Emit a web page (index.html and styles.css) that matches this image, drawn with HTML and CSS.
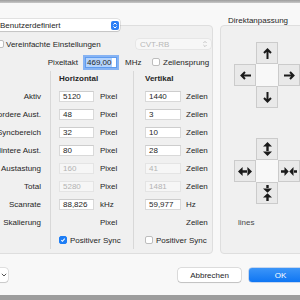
FILE: index.html
```html
<!DOCTYPE html>
<html lang="de">
<head>
    <meta charset="UTF-8">
    <title>Benutzerdefinierte Auflösung</title>
    <link rel="stylesheet" href="styles.css">
</head>
<body>
    <div class="topbar"></div>
    <div class="window">
        <div class="main">
            <div class="left">
                <div class="popup">
                    <span>Benutzerdefiniert</span>
                    <span class="stepper">
                        <svg width="8" height="9" viewBox="0 0 8 9"><path d="M2.4 3.6 L4 2 L5.6 3.6 M2.4 5.4 L4 7 L5.6 5.4" stroke="#fff" stroke-width="1" fill="none"/></svg>
                    </span>
                </div>
                <div class="box box-left">
                    <div class="row row-simple">
                        <span class="check"></span>
                        <span class="check-label">Vereinfachte Einstellungen</span>
                        <div class="popup-disabled">
                            <span>CVT-RB</span>
                            <svg width="6" height="8" viewBox="0 0 6 8"><path d="M1.4 3 L3 1.4 L4.6 3 M1.4 5 L3 6.6 L4.6 5" stroke="#bdbdbd" stroke-width="0.9" fill="none"/></svg>
                        </div>
                    </div>
                    <div class="row row-clock">
                        <span class="clock-label">Pixeltakt</span>
                        <span class="field field-focus"><span class="sel">469,00</span></span>
                        <span class="unit-mhz">MHz</span>
                        <span class="check"></span>
                        <span class="check-label">Zeilensprung</span>
                    </div>
                    <div class="cols">
                        <div class="col col-labels">
                            <div class="head"></div>
                            <div class="cell">Aktiv</div>
                            <div class="cell">Vordere Aust.</div>
                            <div class="cell">Syncbereich</div>
                            <div class="cell">Hintere Aust.</div>
                            <div class="cell">Austastung</div>
                            <div class="cell">Total</div>
                            <div class="cell">Scanrate</div>
                            <div class="cell">Skalierung</div>
                            <div class="cell"></div>
                        </div>
                        <div class="col col-h">
                            <div class="head">Horizontal</div>
                            <div class="cell"><span class="field">5120</span><span class="unit">Pixel</span></div>
                            <div class="cell"><span class="field">48</span><span class="unit">Pixel</span></div>
                            <div class="cell"><span class="field">32</span><span class="unit">Pixel</span></div>
                            <div class="cell"><span class="field">80</span><span class="unit">Pixel</span></div>
                            <div class="cell"><span class="field disabled">160</span><span class="unit">Pixel</span></div>
                            <div class="cell"><span class="field disabled">5280</span><span class="unit">Pixel</span></div>
                            <div class="cell"><span class="field">88,826</span><span class="unit">kHz</span></div>
                            <div class="cell"><span class="unit unit-only">Pixel</span></div>
                            <div class="cell">
                                <span class="check checked">
                                    <svg width="8" height="8" viewBox="0 0 8 8"><path d="M1.8 4.1 L3.3 5.7 L6.3 2.2" stroke="#fff" stroke-width="1.4" fill="none"/></svg>
                                </span>
                                <span class="check-label">Positiver Sync</span>
                            </div>
                        </div>
                        <div class="col col-v">
                            <div class="head">Vertikal</div>
                            <div class="cell"><span class="field">1440</span><span class="unit">Zeilen</span></div>
                            <div class="cell"><span class="field">3</span><span class="unit">Zeilen</span></div>
                            <div class="cell"><span class="field">10</span><span class="unit">Zeilen</span></div>
                            <div class="cell"><span class="field">28</span><span class="unit">Zeilen</span></div>
                            <div class="cell"><span class="field disabled">41</span><span class="unit">Zeilen</span></div>
                            <div class="cell"><span class="field disabled">1481</span><span class="unit">Zeilen</span></div>
                            <div class="cell"><span class="field">59,977</span><span class="unit">Hz</span></div>
                            <div class="cell"><span class="unit unit-only">Zeilen</span></div>
                            <div class="cell">
                                <span class="check"></span>
                                <span class="check-label">Positiver Sync</span>
                            </div>
                        </div>
                    </div>
                </div>
            </div>
            <div class="right">
                <div class="title">Direktanpassung</div>
                <div class="box box-right">
                    <div class="pad">
                        <span class="key key-n">
                            <svg width="9" height="11" viewBox="0 0 9 11"><path d="M1 5 L4.5 1.5 L8 5 M4.5 2 V11" stroke="#1a1a1a" stroke-width="2" fill="none"/></svg>
                        </span>
                        <span class="key key-w">
                            <svg width="11" height="9" viewBox="0 0 11 9"><path d="M5 1 L1.5 4.5 L5 8 M2 4.5 H11" stroke="#1a1a1a" stroke-width="2" fill="none"/></svg>
                        </span>
                        <span class="key-c"></span>
                        <span class="key key-e">
                            <svg width="11" height="9" viewBox="0 0 11 9"><path d="M6 1 L9.5 4.5 L6 8 M9 4.5 H0" stroke="#1a1a1a" stroke-width="2" fill="none"/></svg>
                        </span>
                        <span class="key key-s">
                            <svg width="9" height="11" viewBox="0 0 9 11"><path d="M1 6 L4.5 9.5 L8 6 M4.5 9 V0" stroke="#1a1a1a" stroke-width="2" fill="none"/></svg>
                        </span>
                    </div>
                    <div class="pad pad-size">
                        <span class="key key-n">
                            <svg width="9" height="14" viewBox="0 0 9 14"><path d="M4.5 0 L9 4.6 L0 4.6 Z M4.5 14 L9 9.4 L0 9.4 Z M3.3 4 H5.7 V10 H3.3 Z" fill="#1a1a1a"/></svg>
                        </span>
                        <span class="key key-w">
                            <svg width="14" height="9" viewBox="0 0 14 9"><path d="M0 4.5 L4.6 0 L4.6 9 Z M14 4.5 L9.4 0 L9.4 9 Z M4 3.3 H10 V5.7 H4 Z" fill="#1a1a1a"/></svg>
                        </span>
                        <span class="key-c"></span>
                        <span class="key key-e">
                            <svg width="16" height="9" viewBox="0 0 16 9"><path d="M3.5 0 L7.7 4.5 L3.5 9 Z M12.5 0 L8.3 4.5 L12.5 9 Z M0 3.3 H4 V5.7 H0 Z M12 3.3 H16 V5.7 H12 Z" fill="#1a1a1a"/></svg>
                        </span>
                        <span class="key key-s">
                            <svg width="9" height="16" viewBox="0 0 9 16"><path d="M0 3.5 L4.5 7.7 L9 3.5 Z M0 12.5 L4.5 8.3 L9 12.5 Z M3.3 0 H5.7 V4 H3.3 Z M3.3 12 H5.7 V16 H3.3 Z" fill="#1a1a1a"/></svg>
                        </span>
                    </div>
                    <div class="lines">lines</div>
                </div>
            </div>
        </div>
        <div class="footer">
            <div class="mini-popup">
                <svg width="6" height="4" viewBox="0 0 6 4"><path d="M0.8 0.8 L3 3 L5.2 0.8" stroke="#555" stroke-width="1" fill="none"/></svg>
            </div>
            <div class="spacer"></div>
            <button class="btn">Abbrechen</button>
            <button class="btn btn-default">OK</button>
        </div>
    </div>
    <div class="bottombar"></div>
</body>
</html>
```

FILE: styles.css
```css
* {
    box-sizing: border-box;
}

html, body {
    margin: 0;
}

body {
    width: 300px;
    height: 300px;
    overflow: hidden;
    background: #f8f8f8;
    font-family: "Liberation Sans", Arial, sans-serif;
    font-size: 8px;
    color: #262626;
}

.topbar {
    height: 3px;
    background: linear-gradient(#9c9c9c, #c8c8c8);
}

.window {
    width: 322px;
    margin-left: -10px;
}

.main {
    display: flex;
    gap: 7px;
    margin-top: 16px;
}

.left {
    width: 223px;
    display: flex;
    flex-direction: column;
}

.popup {
    position: relative;
    z-index: 1;
    display: flex;
    align-items: center;
    width: 130px;
    height: 12px;
    margin-bottom: -6px;
    padding: 0 1px 0 10px;
    background: #fff;
    border-radius: 3px;
    box-shadow: 0 0 0 0.5px rgba(0, 0, 0, 0.18), 0 1px 1px rgba(0, 0, 0, 0.1);
}

    .popup .stepper {
        margin-left: auto;
        width: 8px;
        height: 9px;
        border-radius: 2px;
        background: #2b7ff6;
        display: flex;
    }

.box {
    background: #f0f0f0;
    border: 1px solid #dedede;
    border-radius: 4px;
}

.box-left {
    flex: 1;
    padding: 9px 0 4px 0;
}

.row {
    display: flex;
    align-items: center;
    height: 18px;
}

.row-simple {
    padding: 0 1px 0 5px;
}

.check {
    width: 8px;
    height: 8px;
    flex: none;
    background: #fff;
    border: 1px solid #bdbdbd;
    border-radius: 2px;
}

    .check.checked {
        background: #1d7df5;
        border-color: #1d7df5;
        display: flex;
        align-items: center;
        justify-content: center;
    }

.check-label {
    margin-left: 3px;
}

.row-simple .check-label {
    margin-left: 2px;
}

.popup-disabled {
    margin-left: auto;
    width: 75px;
    height: 10px;
    display: flex;
    align-items: center;
    justify-content: space-between;
    padding: 0 3px 0 4px;
    background: #f7f7f7;
    color: #b7b7b7;
    border-radius: 3px;
    box-shadow: 0 0 0 0.5px rgba(0, 0, 0, 0.08);
}

.clock-label {
    width: 87px;
    text-align: right;
}

.field {
    display: flex;
    align-items: center;
    width: 35px;
    height: 11px;
    padding-left: 3px;
    background: #fff;
    border: 1px solid #d9d9d9;
    border-top-color: #cdcdcd;
    flex: none;
}

    .field.disabled {
        background: #f6f6f6;
        border-color: #e4e4e4;
        color: #b3b3b3;
    }

.field-focus {
    width: 32px;
    margin-left: 7px;
    padding-left: 0;
    border-color: #5f9cf0;
    box-shadow: 0 0 0 2px #86b3f3;
}

.sel {
    background: #b5d4fc;
    padding: 0 1px;
    line-height: 9px;
}

.unit-mhz {
    margin-left: 8px;
    width: 27px;
}

.cols {
    display: flex;
}

.col-labels {
    width: 59px;
    padding-right: 9px;
    text-align: right;
    white-space: nowrap;
}

    .col-labels .cell {
        justify-content: flex-end;
    }

.col-h {
    width: 83px;
    padding-left: 8px;
    border-left: 1px solid #d8d8d8;
}

.col-v {
    flex: 1;
    padding-left: 11px;
    border-left: 1px solid #d8d8d8;
}

    .col-v .field {
        width: 36px;
    }

.head {
    height: 16px;
    line-height: 16px;
    font-weight: bold;
}

.cell {
    display: flex;
    align-items: center;
    height: 18px;
}

.unit {
    margin-left: 6px;
}

.col-v .unit {
    margin-left: 5px;
}

.col-h .unit-only {
    margin-left: 41px;
}

.col-v .unit-only {
    margin-left: 41px;
}

.right {
    width: 92px;
    display: flex;
    flex-direction: column;
}

.title {
    height: 8px;
    line-height: 8px;
    margin-top: -2px;
    padding-left: 8px;
}

.box-right {
    flex: 1;
    padding: 16px 0 0 13px;
}

.pad {
    display: grid;
    grid-template-columns: repeat(3, 22px);
    grid-template-rows: repeat(3, 22px);
}

.pad-size {
    margin-top: 30px;
}

.key {
    display: flex;
    align-items: center;
    justify-content: center;
    background: #e9e9e9;
    border: 1px solid #cbcbcb;
}

.key-n { grid-column: 2; grid-row: 1; }
.key-w { grid-column: 1; grid-row: 2; }
.key-c { grid-column: 2; grid-row: 2; background: #f8f8f8; }
.key-e { grid-column: 3; grid-row: 2; }
.key-s { grid-column: 2; grid-row: 3; }

.lines {
    margin: 15px 0 0 4px;
    line-height: 8px;
    color: #4a4a4a;
}

.footer {
    display: flex;
    height: 14px;
    margin-top: 14px;
}

.mini-popup {
    width: 18px;
    display: flex;
    align-items: center;
    padding-left: 11px;
    background: #fff;
    border-radius: 3px;
    box-shadow: 0 0 0 0.5px rgba(0, 0, 0, 0.2), 0 1px 1px rgba(0, 0, 0, 0.1);
}

.spacer {
    flex: 1;
}

.btn {
    width: 63px;
    height: 14px;
    padding: 0;
    font-family: inherit;
    font-size: 8px;
    color: #262626;
    background: #fff;
    border: none;
    border-radius: 3px;
    box-shadow: 0 0 0 0.5px rgba(0, 0, 0, 0.22), 0 1px 1px rgba(0, 0, 0, 0.12);
}

    .btn + .btn {
        margin-left: 8px;
    }

.btn-default {
    color: #fff;
    background: linear-gradient(#3c95f8, #0f76f3);
    box-shadow: 0 0 0 0.5px rgba(0, 80, 200, 0.4);
}

.bottombar {
    height: 10px;
    margin-top: 13px;
    background: #9d9d9d;
}
```
